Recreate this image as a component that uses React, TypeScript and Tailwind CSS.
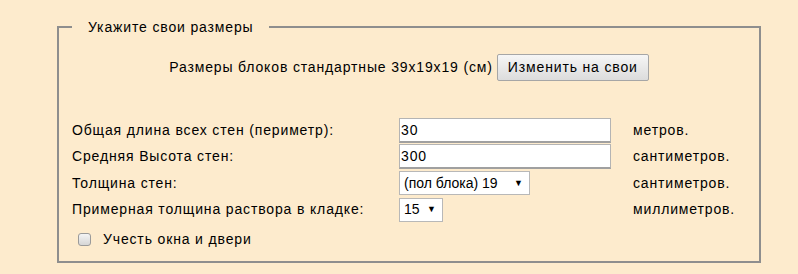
import { useState } from "react";

const rows = [
  { label: "Общая длина всех стен (периметр):", kind: "input", value: "30", unit: "метров." },
  { label: "Средняя Высота стен:", kind: "input", value: "300", unit: "сантиметров." },
  { label: "Толщина стен:", kind: "select", value: "(пол блока) 19", unit: "сантиметров.", w: "w-[131px]" },
  { label: "Примерная толщина раствора в кладке:", kind: "select", value: "15", unit: "миллиметров.", w: "w-[44px]" },
];

export default function App() {
  const [checked, setChecked] = useState(false);

  return (
    <div className="min-h-[274px] w-[798px] bg-[#fdebcd] pt-[18px] pl-[57px] font-['Liberation_Sans',Arial,sans-serif] text-[14px] text-black tracking-[0.85px]">
      <fieldset className="w-[704px] h-[245px] border-2 border-[#8e8e8e] px-[13px]">
        <legend className="px-[16px] leading-[18px]">Укажите свои размеры</legend>

        {/* стандартные блоки */}
        <div className="flex items-center justify-center gap-[4px] mt-[18px]">
          <span>Размеры блоков стандартные 39x19x19 (см)</span>
          <button className="h-[27px] w-[152px] border border-[#a6a6a6] rounded-[2px] bg-gradient-to-b from-[#f6f6f6] to-[#dcdcdc] text-[14px]">
            Изменить на свои
          </button>
        </div>

        {/* параметры */}
        <div className="grid grid-cols-[327px_234px_auto] mt-[36px]">
          {rows.map((r) => (
            <div key={r.label} className="contents">
              <div className="h-[26.5px] flex items-center">{r.label}</div>
              <div className="h-[26.5px] flex items-center">
                {r.kind === "input" ? (
                  <input
                    defaultValue={r.value}
                    className="w-[212px] h-[25px] bg-white border border-[#b4b4b4] border-b-2 border-b-[#a0a0a0] px-[1px] outline-none text-[14px] tracking-[0.9px]"
                  />
                ) : (
                  <div className={`${r.w} h-[24px] bg-white border border-[#b8b8b8] flex items-center justify-between pl-[4px] pr-[6px] tracking-normal`}>
                    <span>{r.value}</span>
                    <span className="text-[9px]">▼</span>
                  </div>
                )}
              </div>
              <div className="h-[26.5px] flex items-center">{r.unit}</div>
            </div>
          ))}
        </div>

        <label className="flex items-center gap-[12px] mt-[4px] ml-[6px] h-[24px]">
          <span
            onClick={() => setChecked(!checked)}
            className="w-[13px] h-[13px] rounded-[3px] border border-[#9a9a9a] bg-gradient-to-b from-[#f4f4f4] to-[#d6d6d6] flex items-center justify-center text-[10px]"
          >
            {checked ? "✓" : ""}
          </span>
          <span>Учесть окна и двери</span>
        </label>
      </fieldset>
    </div>
  );
}
